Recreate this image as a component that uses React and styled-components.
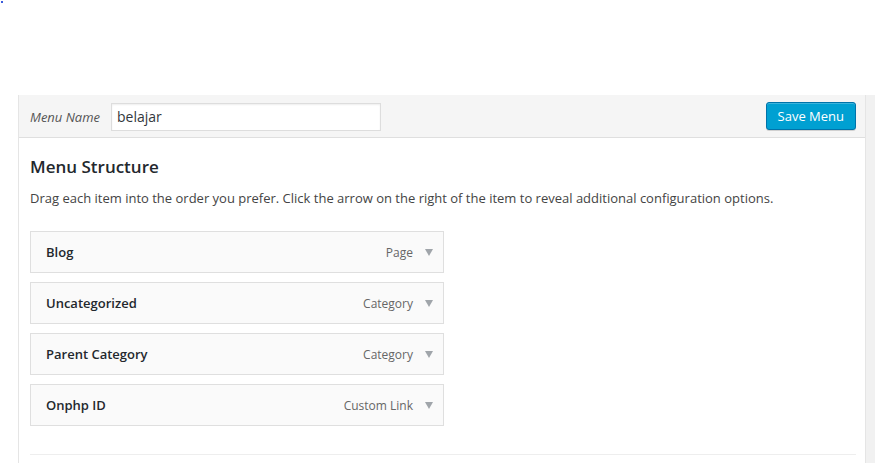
import React from "react";
import styled, { createGlobalStyle } from "styled-components";

const GlobalStyle = createGlobalStyle`
  html, body {
    margin: 0;
    padding: 0;
    background: #fff;
    font-family: "Open Sans", "Liberation Sans", sans-serif;
    color: #23282d;
  }
`;

const items = [
  { title: "Blog", type: "Page" },
  { title: "Uncategorized", type: "Category" },
  { title: "Parent Category", type: "Category" },
  { title: "Onphp ID", type: "Custom Link" },
];

const App = () => {
  return (
    <>
      <GlobalStyle />
      <Dot />
      <Page>
        <Panel>
          <Header>
            <NameLabel>Menu Name</NameLabel>
            <NameInput defaultValue="belajar" />
            <SaveButton>Save Menu</SaveButton>
          </Header>
          <Body>
            <Heading>Menu Structure</Heading>
            <Description>
              Drag each item into the order you prefer. Click the arrow on the
              right of the item to reveal additional configuration options.
            </Description>
            <ItemList>
              {items.map((item) => (
                <MenuItem key={item.title}>
                  <ItemTitle>{item.title}</ItemTitle>
                  <ItemControls>
                    <ItemType>{item.type}</ItemType>
                    <Arrow />
                  </ItemControls>
                </MenuItem>
              ))}
            </ItemList>
            <Divider />
          </Body>
        </Panel>
        <SideStrip />
      </Page>
    </>
  );
};

const Dot = styled.div`
  position: absolute;
  top: 1px;
  left: 1px;
  width: 2px;
  height: 2px;
  background: #3b5bdb;
`;

const Page = styled.div`
  display: flex;
  padding-top: 95px;
  padding-left: 18px;
  height: 463px;
  box-sizing: border-box;
  overflow: hidden;
`;

const Panel = styled.div`
  width: 848px;
  flex-shrink: 0;
  box-sizing: border-box;
  border-left: 1px solid #e5e5e5;
  border-right: 1px solid #e5e5e5;
  background: #fff;
`;

const SideStrip = styled.div`
  flex: 1;
  background: #f1f1f1;
`;

const Header = styled.div`
  display: flex;
  align-items: center;
  height: 43px;
  box-sizing: border-box;
  padding: 0 9px 0 11px;
  background: #f5f5f5;
  border-bottom: 1px solid #dfdfdf;
`;

const NameLabel = styled.span`
  font-style: italic;
  font-size: 13px;
  color: #555;
  margin-right: 11px;
  margin-top: 1px;
`;

const NameInput = styled.input`
  width: 270px;
  height: 28px;
  box-sizing: border-box;
  border: 1px solid #ddd;
  box-shadow: inset 0 1px 2px rgba(0, 0, 0, 0.07);
  background: #fff;
  padding: 0 5px;
  font-family: "Open Sans", "Liberation Sans", sans-serif;
  font-size: 14px;
  color: #32373c;
  outline: none;
  margin-top: 1px;
`;

const SaveButton = styled.button`
  margin-left: auto;
  height: 28px;
  padding: 0 11px;
  margin-top: -1px;
  background: #00a0d2;
  border: 1px solid #0073aa;
  border-radius: 3px;
  box-shadow: inset 0 1px 0 rgba(120, 200, 230, 0.5), 0 1px 0 rgba(0, 0, 0, 0.15);
  color: #fff;
  font-family: "Open Sans", "Liberation Sans", sans-serif;
  font-size: 13px;
  cursor: pointer;
`;

const Body = styled.div`
  padding: 17px 9px 0 11px;
`;

const Heading = styled.h3`
  margin: 0;
  font-size: 17px;
  font-weight: 600;
  line-height: 24px;
  color: #23282d;
`;

const Description = styled.p`
  margin: 9px 0 0;
  font-size: 13px;
  line-height: 20px;
  color: #444;
`;

const ItemList = styled.div`
  display: flex;
  flex-direction: column;
  gap: 9px;
  margin-top: 23px;
`;

const MenuItem = styled.div`
  display: flex;
  align-items: center;
  justify-content: space-between;
  width: 414px;
  height: 42px;
  box-sizing: border-box;
  padding: 0 10px 0 15px;
  background: #fafafa;
  border: 1px solid #dfdfdf;
`;

const ItemTitle = styled.span`
  font-size: 13px;
  font-weight: 600;
  color: #23282d;
`;

const ItemControls = styled.div`
  display: flex;
  align-items: center;
  gap: 12px;
`;

const ItemType = styled.span`
  font-size: 12px;
  color: #666;
`;

const Arrow = styled.span`
  width: 0;
  height: 0;
  border-left: 4px solid transparent;
  border-right: 4px solid transparent;
  border-top: 7px solid #a0a5aa;
`;

const Divider = styled.div`
  margin-top: 28px;
  height: 1px;
  background: #eee;
`;

export default App;
